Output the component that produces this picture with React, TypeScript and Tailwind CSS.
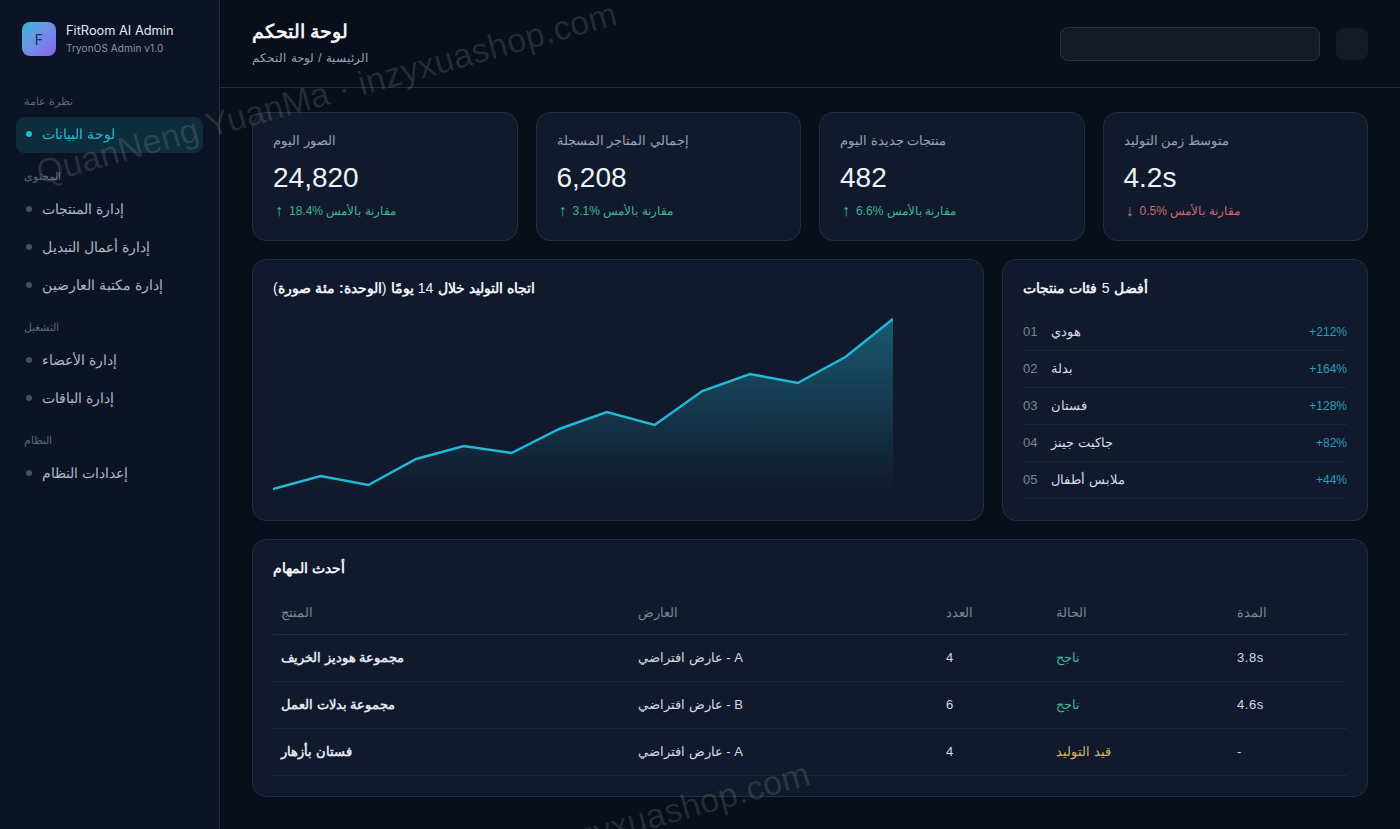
import React from "react";

const groups = [
  { label: "نظرة عامة", items: [{ t: "لوحة البيانات", active: true }] },
  { label: "المحتوى", items: [{ t: "إدارة المنتجات" }, { t: "إدارة أعمال التبديل" }, { t: "إدارة مكتبة العارضين" }] },
  { label: "التشغيل", items: [{ t: "إدارة الأعضاء" }, { t: "إدارة الباقات" }] },
  { label: "النظام", items: [{ t: "إعدادات النظام" }] },
];

const stats = [
  { l: "الصور اليوم", v: "24,820", d: "18.4%", up: true },
  { l: "إجمالي المتاجر المسجلة", v: "6,208", d: "3.1%", up: true },
  { l: "منتجات جديدة اليوم", v: "482", d: "6.6%", up: true },
  { l: "متوسط زمن التوليد", v: "4.2s", d: "0.5%", up: false },
];

const top = [
  ["01", "هودي", "+212%"],
  ["02", "بدلة", "+164%"],
  ["03", "فستان", "+128%"],
  ["04", "جاكيت جينز", "+82%"],
  ["05", "ملابس أطفال", "+44%"],
];

const rows = [
  ["مجموعة هوديز الخريف", "عارض افتراضي - A", "4", "ناجح", "3.8s", "ok"],
  ["مجموعة بدلات العمل", "عارض افتراضي - B", "6", "ناجح", "4.6s", "ok"],
  ["فستان بأزهار", "عارض افتراضي - A", "4", "قيد التوليد", "-", "run"],
];

const pts: [number, number][] = [
  [0, 170], [47.7, 157], [95.4, 166], [143.1, 140], [190.8, 127], [238.5, 134], [286.2, 110], [333.9, 93], [381.6, 106], [429.3, 72], [477, 55], [524.7, 64], [572.4, 38], [620, 0],
];
const linePts = pts.map((p) => `${p[0]},${p[1] + 5}`).join(" ");

function Card({ className, children }: { className: string; children: React.ReactNode }) {
  return <section className={`rounded-[14px] border border-[#232d40] bg-[#111a2c] ${className}`}>{children}</section>;
}

export default function App() {
  return (
    <div className="relative flex h-[829px] overflow-hidden bg-[#080e1a] font-['Liberation_Sans','Noto_Sans',sans-serif] text-[#e5e9f0]">
      <aside className="flex w-[220px] shrink-0 flex-col border-r border-[#232b3b] bg-[#0c1324] px-4 pt-[22px]">
        <div className="ml-[6px] flex h-[34px] items-center gap-[10px]">
          <div className="flex h-[34px] w-[34px] items-center justify-center rounded-[8px] bg-gradient-to-br from-[#22b8d6] to-[#8b5cf6] font-['Inter'] text-[14px] text-[#153050]">F</div>
          <div className="font-['Inter']">
            <div className="text-[12.8px] leading-[18px] text-[#e2e8f0]">FitRoom AI Admin</div>
            <div className="text-[10px] leading-[17px] tracking-[0.1px] text-[#8a95a6]">TryonOS Admin v1.0</div>
          </div>
        </div>
        <nav className="mt-[37px] flex flex-col">
          {groups.map((g) => (
            <div key={g.label} className="mb-[15px]">
              <div className="mb-[8px] pl-2 text-[11px] leading-[16px] text-[#5d6879]">{g.label}</div>
              <div className="flex flex-col gap-[2px]">
                {g.items.map((i: { t: string; active?: boolean }) => (
                  <div key={i.t} className={`flex h-[36px] w-[187px] items-center gap-[10px] rounded-[8px] px-[10px] pb-[2px] text-[14px] ${i.active ? "bg-[#0d2c3c] text-[#22b8d6]" : "text-[#aeb6c3]"}`}>
                    <span className={`h-[6px] w-[6px] rounded-full ${i.active ? "bg-[#22b8d6]" : "bg-[#475063]"}`} />
                    {i.t}
                  </div>
                ))}
              </div>
            </div>
          ))}
        </nav>
      </aside>
      <main className="flex min-w-0 flex-1 flex-col">
        <header className="flex h-[88px] items-center justify-between border-b border-[#232b3b] px-8">
          <div>
            <h1 className="-mt-[2px] text-[19px] font-bold leading-[26px] text-[#f1f5f9]">لوحة التحكم</h1>
            <div className="mt-[5px] text-[12px] leading-[16px] text-[#94a3b8] [word-spacing:1.3px]">الرئيسية / لوحة التحكم</div>
          </div>
          <div className="flex items-center gap-4">
            <div className="h-[34px] w-[260px] rounded-[8px] border border-[#2a3240] bg-[#141a27]" />
            <div className="h-8 w-8 rounded-[8px] bg-[#141a27]" />
          </div>
        </header>
        <div className="flex flex-col gap-[18px] px-8 pt-6">
          <div className="grid grid-cols-4 gap-[18px]">
            {stats.map((s) => (
              <Card key={s.l} className="h-[129px] px-5 pt-[18px]">
                <div className="text-[13px] leading-[20px] text-[#94a3b8]">{s.l}</div>
                <div className="mt-[8px] text-[28px] leading-[38px] text-[#eef2f7]">{s.v}</div>
                <div className={`mt-[5px] flex items-center gap-[6px] text-[12px] leading-[18px] ${s.up ? "text-[#3fb58f]" : "text-[#d4666f]"}`}>
                  <span className="pl-[2px] text-[16px] leading-[18px]">{s.up ? "↑" : "↓"}</span>
                  <span>
                    <span className="tracking-[0.1px]">{s.d}</span> مقارنة بالأمس
                  </span>
                </div>
              </Card>
            ))}
          </div>
          <div className="grid grid-cols-[732px_366px] gap-[18px]">
            <Card className="h-[262px] px-5 pt-[18px]">
              <h2 className="text-[14px] font-bold leading-[20px] text-[#f1f5f9] [word-spacing:0.3px]">
                اتجاه التوليد خلال <span className="font-normal">14</span> يومًا <span className="font-normal">(</span>الوحدة: مئة صورة<span className="font-normal">)</span>
              </h2>
              <svg width="620" height="190" viewBox="0 0 620 190" className="mt-[16px] block">
                <defs>
                  <linearGradient id="fill" x1="0" y1="0" x2="0" y2="1">
                    <stop offset="0" stopColor="#22b8d6" stopOpacity="0.4" />
                    <stop offset="1" stopColor="#22b8d6" stopOpacity="0" />
                  </linearGradient>
                </defs>
                <polygon points={`0,175 ${linePts} 620,175`} fill="url(#fill)" />
                <polyline points={linePts} fill="none" stroke="#22b8d6" strokeWidth="2.5" />
              </svg>
            </Card>
            <Card className="h-[262px] px-5 pt-[18px]">
              <h2 className="text-[14px] font-bold leading-[20px] text-[#f1f5f9] [word-spacing:0.5px]">
                أفضل <span className="font-normal">5</span> فئات منتجات
              </h2>
              <ul className="mt-[16px]">
                {top.map((r) => (
                  <li key={r[0]} className="flex h-[37px] items-center border-b border-[#1b2536] text-[13px]">
                    <span className="w-[28px] text-[#7b8596]">{r[0]}</span>
                    <span className="text-[#d5dbe5]">{r[1]}</span>
                    <span className="ml-auto text-[12px] text-[#2b9dba]">{r[2]}</span>
                  </li>
                ))}
              </ul>
            </Card>
          </div>
          <Card className="h-[258px] px-5 pt-[18px]">
            <h2 className="text-[14px] font-bold leading-[20px] text-[#f1f5f9]">أحدث المهام</h2>
            <table className="mt-[13px] w-full border-collapse text-left text-[13px]">
              <thead>
                <tr className="h-[43px] border-b border-[#232d40] text-[#7b8596]">
                  <th className="w-[357px] px-2 font-normal">المنتج</th>
                  <th className="w-[308px] px-2 font-normal">العارض</th>
                  <th className="w-[110px] px-2 font-normal">العدد</th>
                  <th className="w-[181px] px-2 font-normal">الحالة</th>
                  <th className="px-2 font-normal">المدة</th>
                </tr>
              </thead>
              <tbody>
                {rows.map((r) => (
                  <tr key={r[0]} className="h-[47px] border-b border-[#1b2536]">
                    <td className="px-2 font-bold text-[#e2e8f0]">{r[0]}</td>
                    <td className="px-2 text-[#d5dbe5]">{r[1]}</td>
                    <td className="px-2 text-[#d5dbe5]">{r[2]}</td>
                    <td className={`px-2 ${r[5] === "ok" ? "text-[#3fb58f]" : "text-[#d9b062]"}`}>{r[3]}</td>
                    <td className="px-2 tracking-[0.6px] text-[#d5dbe5]">{r[4]}</td>
                  </tr>
                ))}
              </tbody>
            </table>
          </Card>
        </div>
      </main>
      <div className="pointer-events-none absolute left-[37px] top-[153px] origin-left -rotate-[15.5deg] whitespace-nowrap text-[34px] leading-[40px] tracking-[0.3px] text-white/[0.12]">QuanNeng YuanMa · inzyxuashop.com</div>
      <div className="pointer-events-none absolute left-[230px] top-[913px] origin-left -rotate-[15.5deg] whitespace-nowrap text-[34px] leading-[40px] tracking-[0.3px] text-white/[0.12]">QuanNeng YuanMa · inzyxuashop.com</div>
    </div>
  );
}
